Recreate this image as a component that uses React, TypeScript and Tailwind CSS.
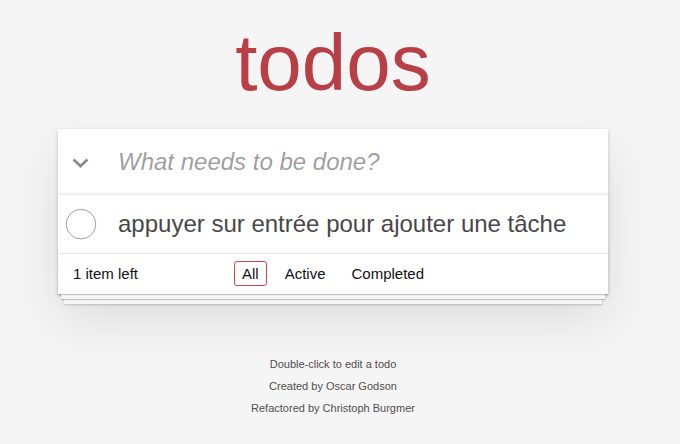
import { useState } from "react";

type Filter = "All" | "Active" | "Completed";

const FILTERS: Filter[] = ["All", "Active", "Completed"];

export default function App() {
  const [filter, setFilter] = useState<Filter>("All");
  const [draft, setDraft] = useState("");
  const todos = [{ id: 1, title: "appuyer sur entrée pour ajouter une tâche", done: false }];
  const left = todos.filter(t => !t.done).length;

  return (
    <div className="min-h-screen bg-[#f5f5f5] font-['Liberation_Sans',Arial,sans-serif] text-[14px] leading-[1.4em] text-[#111]">
      <div className="ml-[58px] w-[550px]">
        {/* Title */}
        <h1 className="h-[129px] pt-[23px] text-center text-[80px] leading-[80px] font-normal text-[#b83f45]">
          todos
        </h1>

        {/* App card */}
        <section className="bg-white shadow-[0_2px_4px_0_rgba(0,0,0,0.2),0_25px_50px_0_rgba(0,0,0,0.1)]">
          <header className="flex h-[65px] items-center shadow-[inset_0_-2px_1px_rgba(0,0,0,0.03)]">
            <svg className="ml-[14px] mt-[2px] h-[10px] w-[17px] shrink-0" viewBox="0 0 17 10">
              <path d="M1.5 1.5 L8.5 8 L15.5 1.5" fill="none" stroke="#8c8c8c" strokeWidth="2.8" strokeLinecap="butt" strokeLinejoin="miter" />
            </svg>
            <input
              value={draft}
              onChange={e => setDraft(e.target.value)}
              placeholder="What needs to be done?"
              className="h-full min-w-0 flex-1 bg-transparent pl-[29px] pr-4 text-[24px] text-[#111] outline-none placeholder:italic placeholder:text-black/40"
            />
          </header>

          <ul className="border-t border-[#e6e6e6]">
            {todos.map(t => (
              <li key={t.id} className="flex items-center text-[24px] leading-[1.2] text-[#484848]">
                <svg width="40" height="40" viewBox="-10 -18 100 135" className="shrink-0">
                  <circle cx="50" cy="50" r="50" fill="none" stroke="#949494" strokeWidth="3" />
                </svg>
                <label className="py-[14.5px] pl-[20px] pr-[15px]">{t.title}</label>
              </li>
            ))}
          </ul>

          <footer className="relative grid h-[41px] grid-cols-[1fr_auto_1fr] items-center border-t border-[#e6e6e6] px-[15px] text-[15px] before:pointer-events-none before:absolute before:inset-x-0 before:bottom-0 before:h-[50px] before:content-[''] before:shadow-[0_1px_1px_rgba(0,0,0,0.2),0_8px_0_-3px_#f6f6f6,0_9px_1px_-3px_rgba(0,0,0,0.2),0_16px_0_-6px_#f6f6f6,0_17px_2px_-6px_rgba(0,0,0,0.2)]">
            <span className="text-left">
              {left} item left
            </span>
            <ul className="flex items-center gap-[10px]">
              {FILTERS.map(f => (
                <li key={f}>
                  <button
                    onClick={() => setFilter(f)}
                    className={`block h-[25px] rounded-[3px] border px-[7px] leading-[23px] ${
                      filter === f ? "border-[#ce4646]" : "border-transparent"
                    }`}
                  >
                    {f}
                  </button>
                </li>
              ))}
            </ul>
            <span />
          </footer>
        </section>

        {/* Info */}
        <div className="mt-[65px] flex flex-col gap-[11px] text-center text-[11px] leading-none text-[#4d4d4d] [text-shadow:0_1px_0_rgba(255,255,255,0.5)]">
          <p>Double-click to edit a todo</p>
          <p>Created by Oscar Godson</p>
          <p>Refactored by Christoph Burgmer</p>
        </div>
      </div>
    </div>
  );
}
